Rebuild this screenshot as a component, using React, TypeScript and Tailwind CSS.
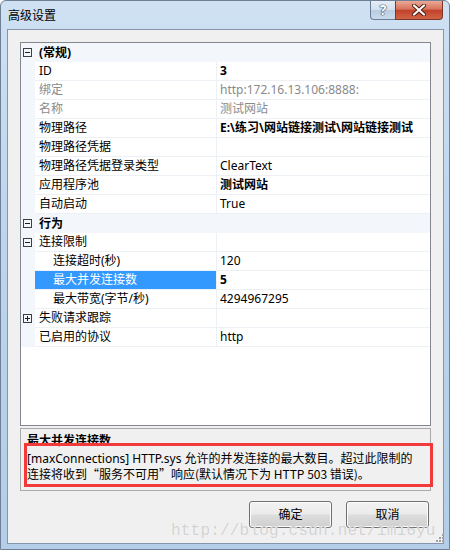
import React from 'react';

type Sign = '-' | '+';

type Row =
  | { kind: 'cat'; label: string; expand: Sign }
  | {
      kind: 'prop';
      label: string;
      value?: string;
      bold?: boolean;
      dim?: boolean;
      indent?: boolean;
      expand?: Sign;
      selected?: boolean;
    };

const rows: Row[] = [
  { kind: 'cat', label: '(常规)', expand: '-' },
  { kind: 'prop', label: 'ID', value: '3', bold: true },
  { kind: 'prop', label: '绑定', value: 'http:172.16.13.106:8888:', dim: true },
  { kind: 'prop', label: '名称', value: '测试网站', dim: true },
  { kind: 'prop', label: '物理路径', value: 'E:\\练习\\网站链接测试\\网站链接测试', bold: true },
  { kind: 'prop', label: '物理路径凭据' },
  { kind: 'prop', label: '物理路径凭据登录类型', value: 'ClearText' },
  { kind: 'prop', label: '应用程序池', value: '测试网站', bold: true },
  { kind: 'prop', label: '自动启动', value: 'True' },
  { kind: 'cat', label: '行为', expand: '-' },
  { kind: 'prop', label: '连接限制', expand: '-' },
  { kind: 'prop', label: '连接超时(秒)', value: '120', indent: true },
  { kind: 'prop', label: '最大并发连接数', value: '5', bold: true, indent: true, selected: true },
  { kind: 'prop', label: '最大带宽(字节/秒)', value: '4294967295', indent: true },
  { kind: 'prop', label: '失败请求跟踪', expand: '+' },
  { kind: 'prop', label: '已启用的协议', value: 'http' },
];

function ExpandBox({ sign }: { sign: Sign }) {
  return (
    <span className="relative flex h-[9px] w-[9px] items-center justify-center border border-[#3f3f3f]">
      <span className="h-px w-[5px] bg-[#1e1e1e]" />
      {sign === '+' && <span className="absolute h-[5px] w-px bg-[#1e1e1e]" />}
    </span>
  );
}

function GridRow({ row }: { row: Row }) {
  if (row.kind === 'cat') {
    return (
      <div className="flex h-[19px] items-center bg-[#f3f6fa]">
        <div className="flex w-[14px] shrink-0 pl-[2px]">
          <ExpandBox sign={row.expand} />
        </div>
        <span className="pl-[4px] font-bold">{row.label}</span>
      </div>
    );
  }
  return (
    <div className="flex h-[19px]">
      <div className="flex w-[14px] shrink-0 items-center bg-[#f3f6fa] pl-[2px]">
        {row.expand && <ExpandBox sign={row.expand} />}
      </div>
      <div
        className={
          'flex w-[182px] shrink-0 items-center border-r border-b border-[#edf0f5] whitespace-nowrap ' +
          (row.indent ? 'pl-[18px] ' : 'pl-[4px] ') +
          (row.selected ? 'bg-[#3399ff] text-white ' : row.dim ? 'text-[#8a8a8a] ' : 'text-black ')
        }
      >
        {row.label}
      </div>
      <div
        className={
          'flex flex-1 items-center border-b border-[#edf0f5] pl-[3px] whitespace-nowrap ' +
          (row.bold ? 'font-bold ' : '') +
          (row.dim ? 'text-[#8a8a8a]' : 'text-black')
        }
      >
        {row.value}
      </div>
    </div>
  );
}

function DialogButton({ label }: { label: string }) {
  return (
    <button className="flex h-[27px] w-[83px] items-center justify-center rounded-[3px] border border-[#707070] bg-[linear-gradient(#f2f2f2_0%,#ebebeb_48%,#dddddd_52%,#cfcfcf_100%)] text-black shadow-[inset_0_0_0_1px_#fcfcfc]">
      {label}
    </button>
  );
}

export default function App() {
  return (
    <div className="relative flex h-[550px] w-[450px] flex-col overflow-hidden rounded-t-[6px] border border-[#6f7f95] bg-[linear-gradient(#cfe1f3,#bdd5ed_40%,#b4cde8)] font-['Noto_Sans','Noto_Sans_CJK_SC',sans-serif] text-[12px] text-black">
      {/* title bar */}
      <div className="flex h-[28px] shrink-0">
        <span className="pl-[7px] pt-[6px] leading-[18px] text-black">高级设置</span>
        <div className="ml-auto mr-[6px] flex h-[19px]">
          <div className="flex w-[25px] items-center justify-center rounded-bl-[4px] border border-t-0 border-r-0 border-[#6b7d94] bg-[linear-gradient(#e4edf7,#d2e0ee_50%,#b9cde3_52%,#c9dbec)] text-[14px] leading-none font-bold text-white [text-shadow:0_0_1px_#2b3b50,0_0_1px_#2b3b50,0_0_1px_#2b3b50]">
            ?
          </div>
          <div className="flex w-[48px] items-center justify-center rounded-br-[4px] border border-t-0 border-[#7d3527] bg-[linear-gradient(#e9a996,#d7735b_45%,#c2412b_52%,#d06447)]">
            <svg width="16" height="12" viewBox="0 0 16 12">
              <path d="M3 1.5 L13 10.5 M13 1.5 L3 10.5" stroke="#4a1a12" strokeWidth="4" strokeLinecap="round" />
              <path d="M3 1.5 L13 10.5 M13 1.5 L3 10.5" stroke="#ffffff" strokeWidth="2.2" strokeLinecap="round" />
            </svg>
          </div>
        </div>
      </div>

      {/* client area */}
      <div className="mb-[5px] ml-[6px] mr-[5px] flex flex-1 flex-col border border-[#8595aa] bg-[#f0f0f0] px-[12px] pt-[12px]">
        <div className="flex h-[384px] flex-col overflow-hidden border border-[#828790] bg-white">
          {rows.map((row, i) => (
            <GridRow key={i} row={row} />
          ))}
        </div>

        <div className="relative mt-[2px] flex h-[63px] flex-col border border-[#a9a9a9] px-[6px] pt-[4px]">
          <div className="leading-[15px] font-bold">最大并发连接数</div>
          <div className="mt-[3px] leading-[15px] whitespace-nowrap">
            [maxConnections] HTTP.sys 允许的并发连接的最大数目。超过此限制的
          </div>
          <div className="font-['Noto_Sans_CJK_SC',sans-serif] leading-[15px] whitespace-nowrap">
            连接将收到“服务不可用”响应(默认情况下为 HTTP 503 错误)。
          </div>
          {/* red annotation */}
          <div className="absolute left-[3px] top-[14px] h-[44px] w-[409px] border-[3px] border-[#f23a3a]" />
        </div>

        <div className="mt-[10px] flex justify-end gap-[14px] pr-[2px]">
          <DialogButton label="确定" />
          <DialogButton label="取消" />
        </div>
      </div>

      {/* watermark */}
      <div className="pointer-events-none absolute left-[170px] top-[521px] font-['Liberation_Mono',monospace] text-[16px] leading-[18px] tracking-[0.2px] text-[#d2d2d2] [text-shadow:0_0_1px_#ffffff]">
        http://blog.csdn.net/im16yu
      </div>

      {/* resize grip */}
      <svg className="absolute left-[435px] top-[533px]" width="8" height="8" viewBox="0 0 8 8">
        <rect x="6" y="0" width="2" height="2" fill="#a0a0a0" />
        <rect x="3" y="3" width="2" height="2" fill="#a0a0a0" />
        <rect x="6" y="3" width="2" height="2" fill="#a0a0a0" />
        <rect x="0" y="6" width="2" height="2" fill="#a0a0a0" />
        <rect x="3" y="6" width="2" height="2" fill="#a0a0a0" />
        <rect x="6" y="6" width="2" height="2" fill="#a0a0a0" />
      </svg>
    </div>
  );
}
